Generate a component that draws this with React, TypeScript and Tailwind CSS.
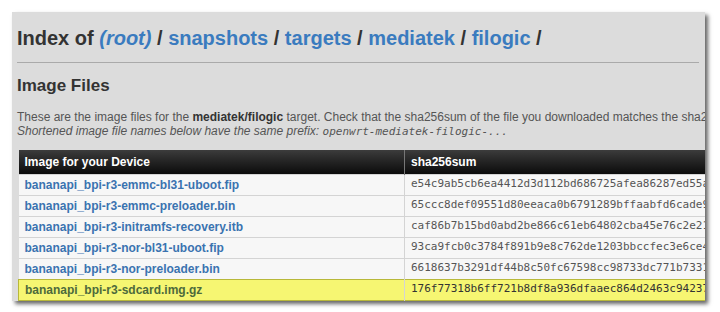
import React from 'react';

const rows = [
  { name: 'bananapi_bpi-r3-emmc-bl31-uboot.fip', sha: 'e54c9ab5cb6ea4412d3d112bd686725afea86287ed55a1c3' },
  { name: 'bananapi_bpi-r3-emmc-preloader.bin', sha: '65ccc8def09551d80eeaca0b6791289bffaabfd6cade9f2c' },
  { name: 'bananapi_bpi-r3-initramfs-recovery.itb', sha: 'caf86b7b15bd0abd2be866c61eb64802cba45e76c2e21a0d' },
  { name: 'bananapi_bpi-r3-nor-bl31-uboot.fip', sha: '93ca9fcb0c3784f891b9e8c762de1203bbccfec3e6ce4b81' },
  { name: 'bananapi_bpi-r3-nor-preloader.bin', sha: '6618637b3291df44b8c50fc67598cc98733dc771b7331e57' },
  { name: 'bananapi_bpi-r3-sdcard.img.gz', sha: '176f77318b6ff721b8df8a936dfaaec864d2463c94237a0e', hl: true },
];

const mono = "font-['DejaVu_Sans_Mono',monospace]";

export default function App() {
  return (
    <div className="w-[720px] h-[312px] bg-white pt-[12px] pl-[12px] font-['Liberation_Sans',Arial,sans-serif]">
      <div className="w-[693px] h-[289px] overflow-hidden bg-[#dcdcdc] shadow-[3px_3px_4px_rgba(0,0,0,0.6)] pl-[5px]">
        {/* Title */}
        <h1 className="h-[50px] pt-[12px] text-[20px] font-bold text-[#333] whitespace-nowrap leading-[28px]">
          Index of <a className="text-[#3a7bbf] italic font-bold">(root)</a> /{' '}
          <a className="text-[#3a7bbf]">snapshots</a> /{' '}
          <a className="text-[#3a7bbf]">targets</a> /{' '}
          <a className="text-[#3a7bbf]">mediatek</a> /{' '}
          <a className="text-[#3a7bbf]">filogic</a> /
        </h1>
        <div className="h-px bg-[#aaa] mr-[6px]" />

        {/* Section */}
        <h2 className="mt-[12px] text-[17px] font-bold text-[#333] leading-[22px]">Image Files</h2>
        <div className="mt-[13px] text-[12px] leading-[14px] text-[#555] whitespace-nowrap">
          <p>
            These are the image files for the <b className="text-[#333]">mediatek/filogic</b> target. Check that the sha256sum of the file you downloaded matches the sha256sum below.
          </p>
          <p className="italic">
            Shortened image file names below have the same prefix:{' '}
            <span className={`${mono} text-[11px]`}>openwrt-mediatek-filogic-...</span>
          </p>
        </div>

        {/* Table */}
        <table className="mt-[11px] ml-[1px] w-[800px] border-collapse text-[12px]">
          <thead>
            <tr className="h-[24px] bg-gradient-to-b from-[#3c3c3c] to-[#0c0c0c] text-white font-bold">
              <th className="w-[386px] text-left pl-[6px] border-r border-[#777]">Image for your Device</th>
              <th className="text-left pl-[6px]">sha256sum</th>
            </tr>
          </thead>
          <tbody>
            {rows.map((r) => (
              <tr
                key={r.name}
                className={
                  r.hl
                    ? 'h-[21px] bg-[#f6f672] border border-[#b8b83a]'
                    : 'h-[21px] bg-[#f7f7f7] border-t border-[#d4d4d4]'
                }
              >
                <td
                  className={
                    'pl-[6px] font-bold border-r border-[#d4d4d4] ' +
                    (r.hl ? 'text-[#4d6a3c]' : 'text-[#3a73b0]')
                  }
                >
                  {r.name}
                </td>
                <td className={`pl-[6px] text-[11px] ${mono} ${r.hl ? 'text-[#333]' : 'text-[#555]'}`}>{r.sha}</td>
              </tr>
            ))}
          </tbody>
        </table>
      </div>
    </div>
  );
}
